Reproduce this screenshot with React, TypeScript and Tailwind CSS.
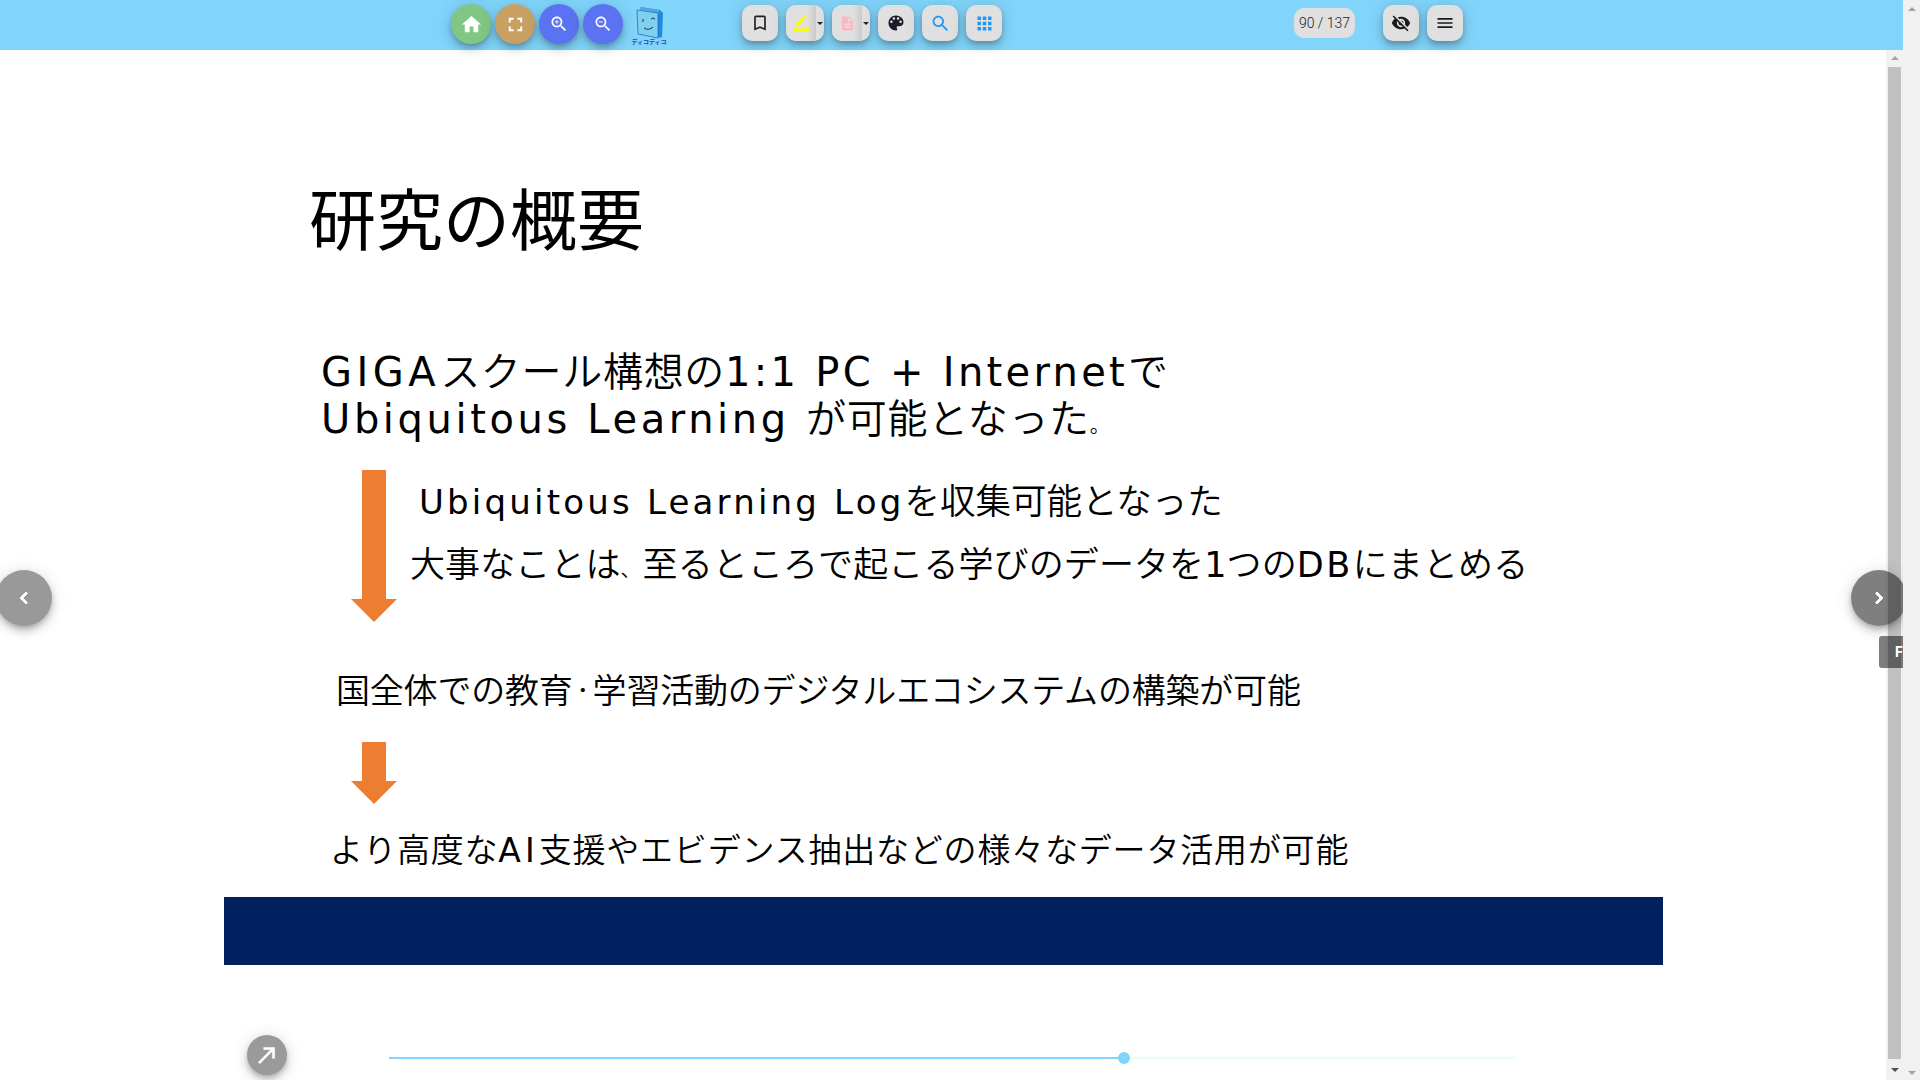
const MAT = {
  home: "M10 20v-6h4v6h5v-8h3L12 3 2 12h3v8z",
  full: "M7 14H5v5h5v-2H7v-3zm-2-4h2V7h3V5H5v5zm12 7h-3v2h5v-5h-2v3zM14 5v2h3v3h2V5h-5z",
  search:
    "M15.5 14h-.79l-.28-.27C15.41 12.59 16 11.11 16 9.5 16 5.91 13.09 3 9.5 3S3 5.91 3 9.5 5.91 16 9.5 16c1.61 0 3.09-.59 4.23-1.57l.27.28v.79l5 4.99L20.49 19l-4.99-5zm-6 0C7.01 14 5 11.99 5 9.5S7.01 5 9.5 5 14 7.01 14 9.5 11.99 14 9.5 14z",
  plus: "M12 10h-2v2H9v-2H7V9h2V7h1v2h2v1z",
  minus: "M7 9h5v1H7z",
  bookmark: "M17 3H7c-1.1 0-1.99.9-1.99 2L5 21l7-3 7 3V5c0-1.1-.9-2-2-2zm0 15l-5-2.18L7 18V5h10v13z",
  pen: "M17.75 7L14 3.25l-10 10V17h3.75l10-10zm2.96-2.96c.39-.39.39-1.02 0-1.41L18.37.29c-.39-.39-1.02-.39-1.41 0L15 2.25 18.75 6l1.96-1.96zM0 20h24v4H0z",
  note: "M14 2H6c-1.1 0-1.99.9-1.99 2L4 20c0 1.1.89 2 1.99 2H18c1.1 0 2-.9 2-2V8l-6-6zm2 16H8v-2h8v2zm0-4H8v-2h8v2zm-3-5V3.5L18.5 9H13z",
  palette:
    "M12 3c-4.97 0-9 4.03-9 9s4.03 9 9 9c.83 0 1.5-.67 1.5-1.5 0-.39-.15-.74-.39-1.01-.23-.26-.38-.61-.38-.99 0-.83.67-1.5 1.5-1.5H16c2.76 0 5-2.24 5-5 0-4.42-4.03-8-9-8zm-5.5 9c-.83 0-1.5-.67-1.5-1.5S5.67 9 6.5 9 8 9.67 8 10.5 7.33 12 6.5 12zm3-4C8.67 8 8 7.33 8 6.5S8.67 5 9.5 5s1.5.67 1.5 1.5S10.33 8 9.5 8zm5 0c-.83 0-1.5-.67-1.5-1.5S13.67 5 14.5 5s1.5.67 1.5 1.5S15.33 8 14.5 8zm3 4c-.83 0-1.5-.67-1.5-1.5S16.67 9 17.5 9s1.5.67 1.5 1.5-.67 1.5-1.5 1.5z",
  apps: "M4 8h4V4H4v4zm6 12h4v-4h-4v4zm-6 0h4v-4H4v4zm0-6h4v-4H4v4zm6 0h4v-4h-4v4zm6-10v4h4V4h-4zm-6 4h4V4h-4v4zm6 6h4v-4h-4v4zm0 6h4v-4h-4v4z",
  eyeOff:
    "M12 7c2.76 0 5 2.24 5 5 0 .65-.13 1.26-.36 1.83l2.92 2.92c1.51-1.26 2.7-2.89 3.43-4.75-1.73-4.39-6-7.5-11-7.5-1.4 0-2.74.25-3.98.7l2.16 2.16C10.74 7.13 11.35 7 12 7zM2 4.27l2.28 2.28.46.46C3.08 8.3 1.78 10.02 1 12c1.73 4.39 6 7.5 11 7.5 1.55 0 3.03-.3 4.38-.84l.42.42L19.73 22 21 20.73 3.27 3 2 4.27zM7.53 9.8l1.55 1.55c-.05.21-.08.43-.08.65 0 1.66 1.34 3 3 3 .22 0 .44-.03.65-.08l1.55 1.55c-.67.33-1.41.53-2.2.53-2.76 0-5-2.24-5-5 0-.79.2-1.53.53-2.2zm4.31-.78l3.15 3.15.02-.16c0-1.66-1.34-3-3-3l-.17.01z",
  menu: "M3 18h18v-2H3v2zm0-5h18v-2H3v2zm0-7v2h18V6H3z",
  left: "M15.41 7.41L14 6l-6 6 6 6 1.41-1.41L10.83 12z",
  right: "M10 6L8.59 7.41 13.17 12l-4.58 4.59L10 18l6-6z",
  northEast: "M9 5v2h6.59L4 18.59 5.41 20 17 8.41V15h2V5H9z",
};

const SHADOW = "shadow-[0_3px_5px_-1px_rgba(0,0,0,0.2),0_6px_10px_0_rgba(0,0,0,0.14),0_1px_18px_0_rgba(0,0,0,0.12)]";

function Icon({ d, className, extra }: { d: string; className: string; extra?: string }) {
  return (
    <svg viewBox="0 0 24 24" className={className} fill="currentColor">
      <path d={d} />
      {extra && <path d={extra} />}
    </svg>
  );
}

function Round({ color, d, extra, size }: { color: string; d: string; extra?: string; size: string }) {
  return (
    <button className={`flex h-10 w-10 items-center justify-center rounded-full text-white ${color} ${SHADOW}`}>
      <Icon d={d} extra={extra} className={size} />
    </button>
  );
}

function Square({ d, color, size = "h-5 w-5" }: { d: string; color: string; size?: string }) {
  return (
    <button className={`flex h-9 w-9 items-center justify-center rounded-[10px] bg-[#e0e0e0] ${color} ${SHADOW}`}>
      <Icon d={d} className={size} />
    </button>
  );
}

function Split({ d, color, iconSize }: { d: string; color: string; iconSize: string }) {
  return (
    <div className={`flex h-9 w-[38px] rounded-[10px] bg-[#e0e0e0] ${SHADOW}`}>
      <div className="flex w-[30px] items-center justify-center rounded-l-[10px] bg-gradient-to-r from-[#e0e0e0] from-70% to-[#cbcbcb]">
        <Icon d={d} className={`${iconSize} ${color}`} />
      </div>
      <div className="flex flex-1 items-center justify-center">
        <div className="h-0 w-0 border-x-[3px] border-t-[3px] border-x-transparent border-t-[#222]" />
      </div>
    </div>
  );
}

function Logo() {
  return (
    <div className="ml-[10px] flex w-[32px] flex-col items-center">
      <svg viewBox="0 0 30 34" className="h-[36px] w-[30px]">
        <path d="M6 3 L26 6 L29 9 L28 33 L24 34 L24 10 Z" fill="#1e88e5" />
        <path d="M6 3 L25 6 L25 9 L6 6 Z" fill="#4fa8e0" />
        <path d="M3 6 L24 9 L24 34 L4 30 Z" fill="#7fd0f0" stroke="#2a6fb5" strokeWidth="0.8" />
        <path d="M9 15 v3 M17 15 q2 -2 4 0 M10 24 q5 3 9 -1" stroke="#234" strokeWidth="1" fill="none" />
      </svg>
      <span className="mt-[-1px] whitespace-nowrap font-['Noto_Sans_CJK_JP',sans-serif] text-[6px] leading-[7px] font-bold text-[#2a3fc0]">
        ディコディコ
      </span>
    </div>
  );
}

function DownArrow({ shaft }: { shaft: string }) {
  return (
    <div className="flex w-[46px] flex-col items-center">
      <div className={`w-6 bg-[#ed7d31] ${shaft}`} />
      <div className="h-0 w-0 border-x-[23px] border-t-[23px] border-x-transparent border-t-[#ed7d31]" />
    </div>
  );
}

function Scrollbar() {
  return (
    <div className="flex h-full w-[17px] flex-col items-center bg-[#f1f1f1]">
      <div className="mt-[6px] h-0 w-0 border-x-[4px] border-b-[4px] border-x-transparent border-b-[#a3a3a3]" />
      <div className="mt-[7px] h-[992px] w-[13px] bg-[#c1c1c1]" />
      <div className="mt-[9px] h-0 w-0 border-x-[4px] border-t-[4px] border-x-transparent border-t-[#505050]" />
    </div>
  );
}

export default function App() {
  return (
    <div className="flex h-screen w-full overflow-hidden bg-white font-['DejaVu_Sans','Noto_Sans_CJK_JP',sans-serif] text-black">
      <div className="flex w-[1903px] flex-col">
        <header className="relative z-10 flex h-[50px] shrink-0 items-center bg-[#81d4fa] pb-[2px] pl-[451px]">
          <div className="flex gap-1">
            <Round color="bg-[#81c784]" d={MAT.home} size="h-[23px] w-[23px]" />
            <Round color="bg-[#c9a063]" d={MAT.full} size="h-[23px] w-[23px]" />
            <Round color="bg-[#5b73f2]" d={MAT.search} extra={MAT.plus} size="h-5 w-5" />
            <Round color="bg-[#5b73f2]" d={MAT.search} extra={MAT.minus} size="h-5 w-5" />
          </div>
          <Logo />
          <div className="mb-[2px] ml-[77px] flex gap-2">
            <Square d={MAT.bookmark} color="text-[#222]" />
            <Split d={MAT.pen} color="text-[#ffff00]" iconSize="h-4 w-4" />
            <Split d={MAT.note} color="text-[#ffb6c1]" iconSize="h-[17px] w-[17px]" />
            <Square d={MAT.palette} color="text-[#1a1a2e]" />
            <Square d={MAT.search} color="text-[#2196f3]" size="h-[21px] w-[21px]" />
            <Square d={MAT.apps} color="text-[#2196f3]" size="h-[21px] w-[21px]" />
          </div>
          <div className="mb-[2px] ml-[292px] flex h-[30px] w-[61px] items-center justify-center rounded-[10px] bg-[#e0e0e0] font-['Roboto',sans-serif] text-sm font-light text-[#222]">
            90 / 137
          </div>
          <div className="mb-[2px] ml-7 flex gap-2">
            <Square d={MAT.eyeOff} color="text-[#1a1a1a]" />
            <Square d={MAT.menu} color="text-[#1a1a1a]" />
          </div>
        </header>

        <div className="flex min-h-0 flex-1">
          <main className="relative flex-1 overflow-hidden">
            <div className="flex flex-col">
              <h1 className="mt-[132px] ml-[309px] text-[67px] leading-[80px] font-normal">研究の概要</h1>

              <p className="mt-[87px] ml-[321px] text-[40px] leading-[47px] font-[350] tracking-[0.7px] whitespace-nowrap">
                <span className="font-normal tracking-[4.5px]">GIGA</span>スクール構想の
                <span className="font-normal tracking-[3.3px]">1:1 PC + Internet</span>で
                <br />
                <span className="font-normal tracking-[3.6px]">Ubiquitous Learning </span>が可能となった
                <span className="text-[20px]">。</span>
              </p>

              <div className="mt-[20px] ml-[351px] flex">
                <DownArrow shaft="h-[129px]" />
                <div className="flex flex-col font-[350]">
                  <div className="mt-[12px] ml-[22px] text-[35.5px] leading-[40px] whitespace-nowrap">
                    <span className="text-[34px] font-normal tracking-[3.2px]">Ubiquitous Learning Log</span>を収集可能となった
                  </div>
                  <div className="mt-[23px] ml-[13px] text-[35px] leading-[40px] tracking-[0.1px] whitespace-nowrap">
                    大事なことは<span className="inline-block w-[22px] text-[20px]">、</span>至るところで起こる学びのデータを
                    <span className="font-normal">1</span>つの
                    <span className="font-normal tracking-[2.5px]">DB</span>にまとめる
                  </div>
                </div>
              </div>

              <div className="mt-[49px] ml-[336px] text-[34px] leading-[40px] font-[350] tracking-[-0.2px] whitespace-nowrap">
                国全体での教育<span className="inline-block w-5 text-center align-[5px] text-[20px]">・</span>学習活動のデジタルエコシステムの構築が可能
              </div>

              <div className="mt-[31px] ml-[351px]">
                <DownArrow shaft="h-[39px]" />
              </div>

              <div className="mt-[27px] ml-[330px] text-[33px] leading-[40px] font-[350] tracking-[0.8px] whitespace-nowrap">
                より高度な<span className="font-normal tracking-[4px]">AI</span>支援やエビデンス抽出などの様々なデータ活用が可能
              </div>

              <div className="mt-[26px] ml-[224px] h-[68px] w-[1439px] bg-[#002060]" />

              <div className="mt-[70px] ml-[247px] flex">
                <button className={`flex h-10 w-10 items-center justify-center rounded-full bg-[#9a9a9a] text-white ${SHADOW}`}>
                  <Icon d={MAT.northEast} className="h-[26px] w-[26px] stroke-current stroke-[0.5]" />
                </button>
                <div className="relative mt-[22px] ml-[102px] h-[2px] w-[1126px] bg-[#e0ffff]">
                  <div className="h-full w-[735px] bg-[#81d4fa]" />
                  <div className="absolute top-[-5px] left-[729px] h-3 w-3 rounded-full bg-[#81d4fa]" />
                </div>
              </div>
            </div>

            <button className={`absolute top-[520px] left-[-4px] flex h-14 w-14 items-center justify-center rounded-full bg-[#999] text-white ${SHADOW}`}>
              <Icon d={MAT.left} className="h-6 w-6 stroke-current stroke-1" />
            </button>
          </main>
          <div className="w-[17px] shrink-0">
            <Scrollbar />
          </div>
          <button className={`absolute top-[570px] left-[1851px] flex h-14 w-14 items-center justify-center rounded-full bg-black/50 text-white ${SHADOW}`}>
            <Icon d={MAT.right} className="h-6 w-6 stroke-current stroke-1" />
          </button>
          <div className="absolute top-[636px] left-[1879px] flex h-8 w-6 items-center overflow-hidden rounded-l-[3px] bg-black/50 pl-4 font-['Roboto',sans-serif] text-sm font-bold text-white">
            F
          </div>
        </div>
      </div>

      <div className="absolute top-0 left-[1903px] z-20 flex h-screen w-[17px] flex-col items-center bg-[#f1f1f1]">
        <div className="mt-[7px] h-0 w-0 border-x-[4px] border-b-[4px] border-x-transparent border-b-[#a3a3a3]" />
        <div className="mt-auto mb-[5px] h-0 w-0 border-x-[4px] border-t-[4px] border-x-transparent border-t-[#a3a3a3]" />
      </div>
    </div>
  );
}
